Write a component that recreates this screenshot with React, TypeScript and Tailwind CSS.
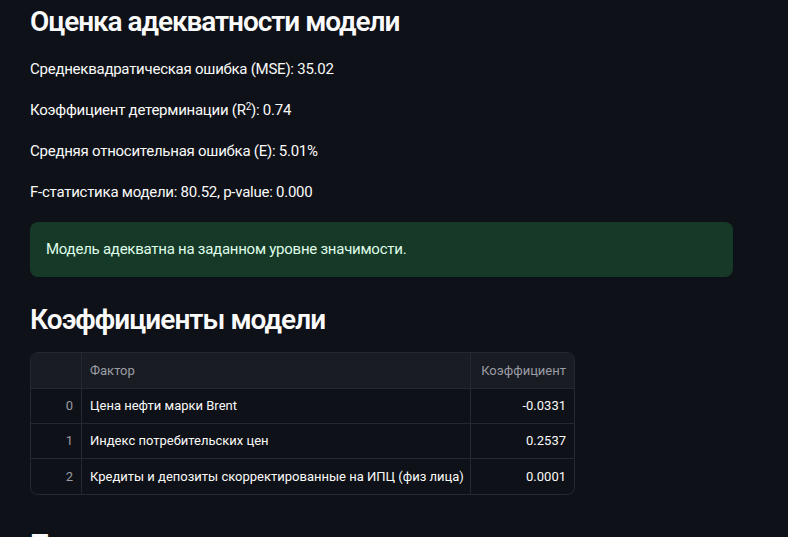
import React from "react";

const rows = [
  { i: "0", f: "Цена нефти марки Brent", c: "-0.0331" },
  { i: "1", f: "Индекс потребительских цен", c: "0.2537" },
  { i: "2", f: "Кредиты и депозиты скорректированные на ИПЦ (физ лица)", c: "0.0001" },
];

export default function App() {
  return (
    <div
      className="w-[788px] h-[537px] overflow-hidden bg-[#0e1117] text-[#fafafa]"
      style={{ fontFamily: "Roboto, 'Noto Sans', sans-serif" }}
    >
      <div className="pl-[30px] w-[733px] flex flex-col">
        <div className="h-[44px] flex items-center text-[28px] font-semibold tracking-[-1.05px]">
          Оценка адекватности модели
        </div>
        <div className="mt-[13px] h-6 flex items-center text-[15px] tracking-[-0.25px]">
          Среднеквадратическая ошибка (MSE): 35.02
        </div>
        <div className="mt-[17px] h-6 flex items-center text-[15px] tracking-[-0.25px]">
          <span>
            Коэффициент детерминации (R<sup className="text-[10px]">2</sup>): 0.74
          </span>
        </div>
        <div className="mt-[17px] h-6 flex items-center text-[15px] tracking-[-0.25px]">
          Средняя относительная ошибка (E): 5.01%
        </div>
        <div className="mt-[17px] h-6 flex items-center text-[15px] tracking-[-0.25px]">
          F-статистика модели: 80.52, p-value: 0.000
        </div>
        <div className="mt-[18px] h-[55px] rounded-lg bg-[#173a28] text-[#dffde9] flex items-center px-4 text-[15px] tracking-[-0.25px]">
          Модель адекватна на заданном уровне значимости.
        </div>
        <div className="mt-[23px] h-[40px] flex items-center text-[28px] font-semibold tracking-[-0.95px]">
          Коэффициенты модели
        </div>
        <div className="mt-[12px] w-[545px] rounded-lg border border-[#262730] overflow-hidden text-[13px] whitespace-nowrap">
          <div className="flex h-[36px] bg-[#1a1c24] border-b border-[#262730] text-[#9a9ca4]">
            <div className="w-[51px] border-r border-[#262730]" />
            <div className="w-[389px] border-r border-[#262730] flex items-center px-2">Фактор</div>
            <div className="flex-1 flex items-center justify-end px-2">Коэффициент</div>
          </div>
          {rows.map((r, idx) => (
            <div
              key={r.i}
              className={`flex h-[35px] ${idx < rows.length - 1 ? "border-b border-[#262730]" : ""}`}
            >
              <div className="w-[51px] border-r border-[#262730] flex items-center justify-end px-2 text-[#9a9ca4]">
                {r.i}
              </div>
              <div className="w-[389px] border-r border-[#262730] flex items-center px-2">{r.f}</div>
              <div className="flex-1 flex items-center justify-end px-2">{r.c}</div>
            </div>
          ))}
        </div>
        <div className="mt-[28px] h-[44px] flex items-center text-[28px] font-semibold tracking-[-0.85px]">
          Прогноз
        </div>
      </div>
    </div>
  );
}
